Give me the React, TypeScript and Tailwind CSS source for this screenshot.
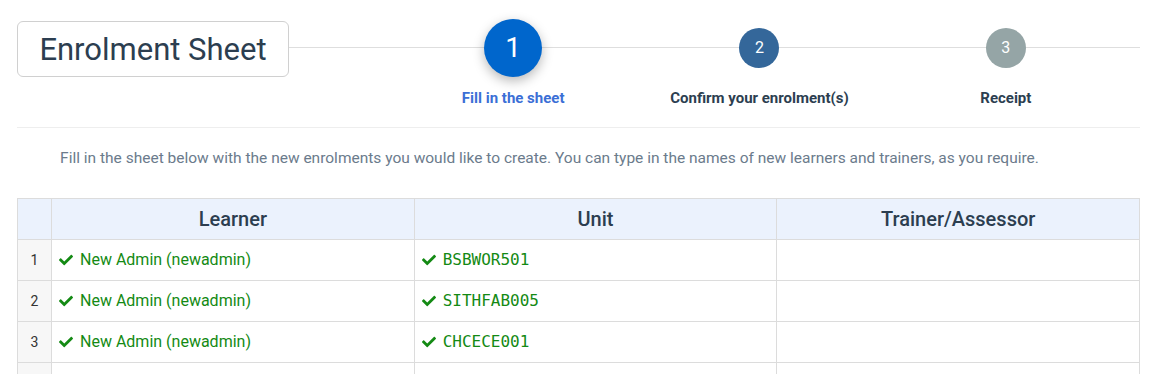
import { FaCheck } from 'react-icons/fa';

type Step = { n: number; label: string; active?: boolean; circle: string };

const steps: Step[] = [
  { n: 1, label: 'Fill in the sheet', active: true, circle: 'bg-[#0066cc]' },
  { n: 2, label: 'Confirm your enrolment(s)', circle: 'bg-[#34679a]' },
  { n: 3, label: 'Receipt', circle: 'bg-[#95a5a6]' },
];

const rows = [
  { learner: 'New Admin (newadmin)', unit: 'BSBWOR501' },
  { learner: 'New Admin (newadmin)', unit: 'SITHFAB005' },
  { learner: 'New Admin (newadmin)', unit: 'CHCECE001' },
  { learner: '', unit: '' },
];

export default function App() {
  return (
    <div className="min-h-screen bg-white pl-[17px] pr-[11px] font-['Roboto',sans-serif] text-[#2c3e50]">
      {/* Header with steps */}
      <div className="flex items-start pt-[19px]">
        <div className="mt-[2px] flex h-[56px] w-[272px] items-center justify-center rounded-[6px] border border-[#d0d0d0] text-[31px] leading-none">
          Enrolment Sheet
        </div>
        <div className="relative flex-1">
          <div className="absolute left-0 right-0 top-[28px] h-px bg-[#dedede]" />
          <div className="relative ml-[101px] mr-[11px] grid grid-cols-3">
            {steps.map((s) => (
              <div key={s.n} className="flex flex-col items-center">
                <div className="flex h-[58px] items-center justify-center">
                  {s.active ? (
                    <div
                      className={`flex h-[58px] w-[58px] items-center justify-center rounded-full ${s.circle} text-[28px] text-white shadow-[0_4px_12px_rgba(0,0,0,0.28)]`}
                    >
                      {s.n}
                    </div>
                  ) : (
                    <div
                      className={`flex h-[40px] w-[40px] items-center justify-center rounded-full ${s.circle} text-[16px] text-white`}
                    >
                      {s.n}
                    </div>
                  )}
                </div>
                <div
                  className={`mt-[11px] text-[15px] font-bold leading-[20px] ${
                    s.active ? 'text-[#3b6fd6]' : 'text-[#2c3e50]'
                  }`}
                >
                  {s.label}
                </div>
              </div>
            ))}
          </div>
        </div>
      </div>

      <div className="mt-[19px] h-px bg-[#eeeeee]" />

      <p className="pr-[58px] pt-[19px] text-center text-[15.5px] leading-[22px] text-[#6b7b8c]">
        Fill in the sheet below with the new enrolments you would like to create. You can type in the names of new
        learners and trainers, as you require.
      </p>

      {/* Sheet */}
      <table className="mt-[29px] w-full table-fixed border-collapse">
        <colgroup>
          <col className="w-[34px]" />
          <col />
          <col />
          <col />
        </colgroup>
        <thead>
          <tr className="bg-[#ebf2fd]">
            <th className="h-[41px] border border-[#dcdcdc]" />
            <th className="border border-[#dcdcdc] text-[20px] font-medium">Learner</th>
            <th className="border border-[#dcdcdc] text-[20px] font-medium">Unit</th>
            <th className="border border-[#dcdcdc] text-[20px] font-medium">Trainer/Assessor</th>
          </tr>
        </thead>
        <tbody>
          {rows.map((r, i) => (
            <tr key={i}>
              <td className="h-[41px] border border-[#dcdcdc] bg-[#f7f7f7] text-center text-[14px] text-[#333]">
                {r.learner ? i + 1 : ''}
              </td>
              <td className="border border-[#dcdcdc] px-[7px] text-[16px] text-[#148a14]">
                {r.learner && (
                  <span className="flex items-center gap-[7px]">
                    <FaCheck className="h-[14px] w-[14px]" />
                    {r.learner}
                  </span>
                )}
              </td>
              <td className="border border-[#dcdcdc] px-[7px] font-['DejaVu_Sans_Mono',monospace] text-[16px] text-[#148a14]">
                {r.unit && (
                  <span className="flex items-center gap-[7px]">
                    <FaCheck className="h-[14px] w-[14px]" />
                    {r.unit}
                  </span>
                )}
              </td>
              <td className="border border-[#dcdcdc]" />
            </tr>
          ))}
        </tbody>
      </table>
    </div>
  );
}
